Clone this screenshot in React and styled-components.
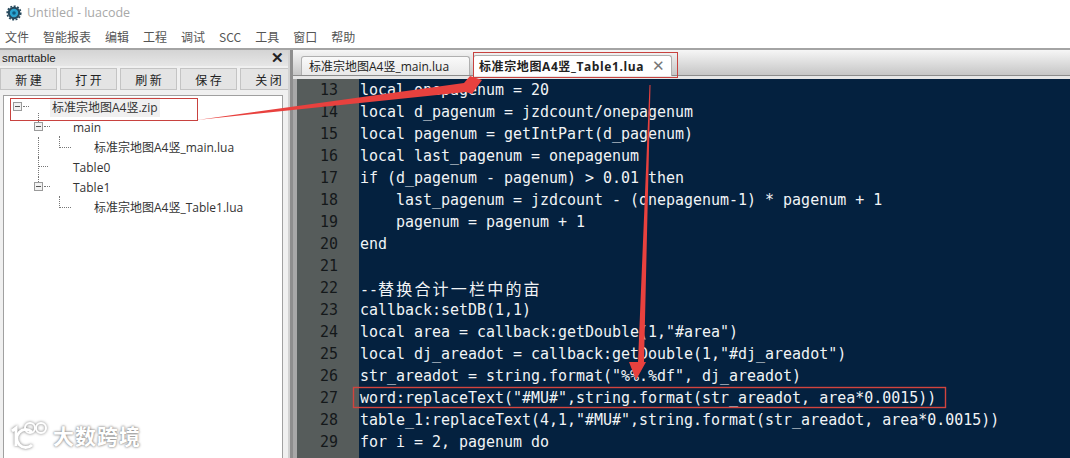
import React from "react";
import styled, { createGlobalStyle } from "styled-components";

const menus = ["文件", "智能报表", "编辑", "工程", "调试", "SCC", "工具", "窗口", "帮助"];
const actions = ["新 建", "打 开", "刷 新", "保 存", "关 闭"];

const treeRows = [
  { level: 0, label: "标准宗地图A4竖.zip", box: true, selected: true },
  { level: 1, label: "main", box: true, trunk: "start" },
  { level: 2, label: "标准宗地图A4竖_main.lua", stem: true, trunk: "full" },
  { level: 1, label: "Table0", stem: true, trunk: "full" },
  { level: 1, label: "Table1", box: true, trunk: "end" },
  { level: 2, label: "标准宗地图A4竖_Table1.lua", stem: true },
];

const codeLines = [
  "local onepagenum = 20",
  "local d_pagenum = jzdcount/onepagenum",
  "local pagenum = getIntPart(d_pagenum)",
  "local last_pagenum = onepagenum",
  "if (d_pagenum - pagenum) > 0.01 then",
  "    last_pagenum = jzdcount - (onepagenum-1) * pagenum + 1",
  "    pagenum = pagenum + 1",
  "end",
  "",
  "--替换合计一栏中的亩",
  "callback:setDB(1,1)",
  'local area = callback:getDouble(1,"#area")',
  'local dj_areadot = callback:getDouble(1,"#dj_areadot")',
  'str_areadot = string.format("%%.%df", dj_areadot)',
  'word:replaceText("#MU#",string.format(str_areadot, area*0.0015))',
  'table_1:replaceText(4,1,"#MU#",string.format(str_areadot, area*0.0015))',
  "for i = 2, pagenum do",
];

const GlobalStyle = createGlobalStyle`
  html, body {
    margin: 0;
    padding: 0;
    background: #ffffff;
  }
`;

const Page = styled.div`
  position: relative;
  width: 1070px;
  height: 458px;
  overflow: hidden;
  display: flex;
  flex-direction: column;
  background: #ffffff;
  font-family: "Noto Sans CJK SC", "Open Sans", sans-serif;
  color: #222;
`;

const TitleBar = styled.div`
  height: 25px;
  display: flex;
  align-items: center;
  gap: 5px;
  padding-left: 6px;
  font-family: "Open Sans", sans-serif;
  font-size: 12.5px;
  color: #a8a8a8;
`;

const MenuBar = styled.div`
  height: 23px;
  display: flex;
  align-items: center;
  padding-left: 5px;
  gap: 14px;
  font-size: 12px;
  color: #555;
`;

const MenuItem = styled.span`
  line-height: 16px;
`;

const Workspace = styled.div`
  flex: 1;
  min-height: 0;
  display: flex;
  background: #a8a8a8;
  border-top: 2px solid #a4a4a4;
`;

const SidePanel = styled.div`
  width: 288px;
  display: flex;
  flex-direction: column;
  background: #f0f0f0;
`;

const PanelHeader = styled.div`
  height: 16px;
  display: flex;
  align-items: center;
  justify-content: space-between;
  padding: 0 4px 0 2px;
  background: linear-gradient(#d4d4d4, #e6e6e6);
  font-family: "Liberation Sans", sans-serif;
  font-size: 11.5px;
`;

const CloseMark = styled.span`
  font-family: "Liberation Sans", sans-serif;
  font-size: 15px;
  font-weight: 700;
  line-height: 16px;
`;

const ActionRow = styled.div`
  display: flex;
  gap: 3px;
  height: 22px;
  margin-top: 2px;
  overflow: hidden;
`;

const ActionButton = styled.div`
  flex: 0 0 57px;
  display: flex;
  align-items: center;
  justify-content: center;
  background: #e4e4e4;
  border: 1px solid #c4c4c4;
  box-sizing: border-box;
  font-size: 12px;
  white-space: pre;
`;

const TreeBox = styled.div`
  flex: 1;
  margin: 5px 5px 0 3px;
  padding-top: 1px;
  background: #ffffff;
  border: 1px solid #a0a0a0;
  border-bottom: none;
`;

const TreeRow = styled.div`
  position: relative;
  height: 20px;
  display: flex;
  align-items: center;
  padding-left: ${(p) => 46 + p.$level * 21}px;
  font-family: "Open Sans", "Noto Sans CJK SC", sans-serif;
  font-size: 12px;
  color: #333;
  white-space: nowrap;

  &::before {
    content: "";
    display: ${(p) => (p.$trunk ? "block" : "none")};
    position: absolute;
    left: 34px;
    top: ${(p) => (p.$trunk === "start" ? "-4px" : "0")};
    height: ${(p) => (p.$trunk === "full" ? "20px" : p.$trunk === "start" ? "9px" : "5px")};
    border-left: 1px dotted #777;
  }
`;

const TreeLabel = styled.span`
  padding: 1px 2px;
  background: ${(p) => (p.$selected ? "#f0f0f0" : "transparent")};
`;

const ExpandBox = styled.span`
  position: absolute;
  left: ${(p) => 9 + p.$level * 21}px;
  top: 5px;
  width: 7px;
  height: 7px;
  border: 1px solid #9a9a9a;
  background: #f2f2f2;

  &::before {
    content: "";
    position: absolute;
    left: 1px;
    right: 1px;
    top: 3px;
    height: 1px;
    background: #555;
  }

  &::after {
    content: "";
    position: absolute;
    left: 9px;
    top: 3px;
    width: 6px;
    border-top: 1px dotted #777;
  }
`;

const Elbow = styled.span`
  position: absolute;
  left: ${(p) => (p.$level === 2 ? 55 : 34)}px;
  top: ${(p) => (p.$level === 2 ? -1 : 9)}px;
  width: ${(p) => (p.$level === 2 ? 11 : 10)}px;
  height: ${(p) => (p.$level === 2 ? 11 : 0)}px;
  border-left: ${(p) => (p.$level === 2 ? "1px dotted #777" : "none")};
  border-bottom: 1px dotted #777;
`;

const Splitter = styled.div`
  width: 5px;
  background: linear-gradient(90deg, #d2d2d2 0 2px, #8e8e8e 2px);
`;

const EditorPane = styled.div`
  flex: 1;
  min-width: 0;
  display: flex;
  flex-direction: column;
`;

const TabStrip = styled.div`
  height: 26px;
  flex: none;
  display: flex;
  align-items: flex-end;
  gap: 3px;
  padding-left: 8px;
  box-sizing: border-box;
  background: linear-gradient(#f6f6f6, #c6c6c6);
  border-bottom: 1px solid #8c8c8c;
`;

const TabGap = styled.div`
  height: 3px;
  flex: none;
  background: #e6e6e6;
`;

const Tab = styled.div`
  height: ${(p) => (p.$active ? 21 : 19)}px;
  width: ${(p) => (p.$active ? 199 : 169)}px;
  margin-bottom: ${(p) => (p.$active ? -1 : 0)}px;
  box-sizing: border-box;
  display: flex;
  align-items: center;
  justify-content: space-between;
  padding: 0 5px 0 ${(p) => (p.$active ? 5 : 7)}px;
  background: ${(p) => (p.$active ? "#ffffff" : "linear-gradient(#fafafa, #e8e8e8)")};
  border: 1px solid #b0b0b0;
  border-bottom: none;
  border-radius: 3px 3px 0 0;
  font-family: "Open Sans", "Noto Sans CJK SC", sans-serif;
  font-size: 12px;
  font-weight: ${(p) => (p.$active ? 700 : 400)};
  letter-spacing: ${(p) => (p.$active ? 0.6 : 0)}px;
  color: #222;
  white-space: nowrap;
`;

const TabClose = styled.span`
  font-family: "Liberation Sans", sans-serif;
  font-size: 15px;
  font-weight: 400;
  color: #777;
`;

const CodeArea = styled.div`
  flex: 1;
  min-height: 0;
  display: flex;
  overflow: hidden;
  background: #04213f;
  font-family: "DejaVu Sans Mono", monospace;
  font-size: 14.96px;
  line-height: 22px;
  border-left: 4px solid #a8a8a8;
`;

const Gutter = styled.div`
  width: 62px;
  flex: none;
  background: #565c5b;
  color: #14181a;
  text-align: right;
  padding-right: 21px;
  box-sizing: border-box;
`;

const CodeColumn = styled.div`
  flex: 1;
  padding-left: 1px;
  color: #f1f4f6;
  white-space: pre;
`;

const CodeLine = styled.div`
  height: 22px;
`;

const CjkRun = styled.span`
  font-family: "Noto Sans CJK SC", sans-serif;
  font-size: 16px;
  letter-spacing: 2.2px;
`;

const Annotations = styled.svg`
  position: absolute;
  left: 0;
  top: 0;
  width: 1070px;
  height: 458px;
  pointer-events: none;
`;

const Watermark = styled.div`
  position: absolute;
  left: 10px;
  top: 420px;
  display: flex;
  align-items: center;
  gap: 3px;
  color: #ffffff;
  font-size: 21px;
  font-weight: 700;
  letter-spacing: 1px;
  text-shadow: 0 0 3px #8a8a8a, 0 0 2px #9a9a9a;
`;

function AppIcon() {
  return (
    <svg width="16" height="16" viewBox="0 0 16 16">
      <circle cx="8" cy="8" r="6.2" fill="#26485c" />
      <circle cx="8" cy="8" r="6.8" fill="none" stroke="#26485c" strokeWidth="1.6" strokeDasharray="2 1.5" />
      <circle cx="8" cy="8" r="4.2" fill="#2aa3cf" />
      <circle cx="8" cy="8" r="1.8" fill="#0f5a80" />
    </svg>
  );
}

function WatermarkLogo() {
  return (
    <svg width="40" height="30" viewBox="0 0 40 30" fill="none" style={{ filter: "drop-shadow(0 0 1.5px #777)" }}>
      <path d="M2 11 L6 8 V26" stroke="#fff" strokeWidth="3" />
      <path d="M22 12 A9 9 0 1 0 22 25" stroke="#fff" strokeWidth="3" />
      <circle cx="20" cy="8" r="5" stroke="#fff" strokeWidth="2" />
      <circle cx="31" cy="8" r="5" stroke="#fff" strokeWidth="2" />
    </svg>
  );
}

function TreeItem({ level, label, box, stem, trunk, selected }) {
  return (
    <TreeRow $level={level} $trunk={trunk}>
      {stem && <Elbow $level={level} />}
      {box && <ExpandBox $level={level} />}
      <TreeLabel $selected={selected}>{label}</TreeLabel>
    </TreeRow>
  );
}

function CodeText({ text }) {
  return text
    .split(/([\u4e00-\u9fff]+)/)
    .map((part, i) => (i % 2 ? <CjkRun key={i}>{part}</CjkRun> : part));
}

export default function App() {
  return (
    <Page>
      <GlobalStyle />
      <TitleBar>
        <AppIcon />
        Untitled - luacode
      </TitleBar>
      <MenuBar>
        {menus.map((m) => (
          <MenuItem key={m}>{m}</MenuItem>
        ))}
      </MenuBar>
      <Workspace>
        <SidePanel>
          <PanelHeader>
            smarttable
            <CloseMark>✕</CloseMark>
          </PanelHeader>
          <ActionRow>
            {actions.map((a) => (
              <ActionButton key={a}>{a}</ActionButton>
            ))}
          </ActionRow>
          <TreeBox>
            {treeRows.map((r) => (
              <TreeItem key={r.label} {...r} />
            ))}
          </TreeBox>
        </SidePanel>
        <Splitter />
        <EditorPane>
          <TabStrip>
            <Tab>标准宗地图A4竖_main.lua</Tab>
            <Tab $active>
              标准宗地图A4竖_Table1.lua
              <TabClose>✕</TabClose>
            </Tab>
          </TabStrip>
          <TabGap />
          <CodeArea>
            <Gutter>
              {codeLines.map((_, i) => (
                <div key={i}>{13 + i}</div>
              ))}
            </Gutter>
            <CodeColumn>
              {codeLines.map((line, i) => (
                <CodeLine key={i}>
                  <CodeText text={line} />
                </CodeLine>
              ))}
            </CodeColumn>
          </CodeArea>
        </EditorPane>
      </Workspace>

      <Annotations viewBox="0 0 1070 458">
        <g fill="none" stroke="#c8423f" strokeWidth="1">
          <rect x="10.5" y="98.5" width="187" height="22" />
          <rect x="473.5" y="52.5" width="204" height="25" />
        </g>
        <rect x="353.5" y="387.5" width="592" height="20" fill="none" stroke="#d2443e" strokeWidth="1.4" />
        <polygon points="197,120 464,83 470,76 482,80 472,94 466,92" fill="#e8413e" />
        <polygon points="649.5,85 650.5,85 644,362 646,362 636,380 629,362 638,362" fill="#e8413e" />
      </Annotations>

      <Watermark>
        <WatermarkLogo />
        大数跨境
      </Watermark>
    </Page>
  );
}
